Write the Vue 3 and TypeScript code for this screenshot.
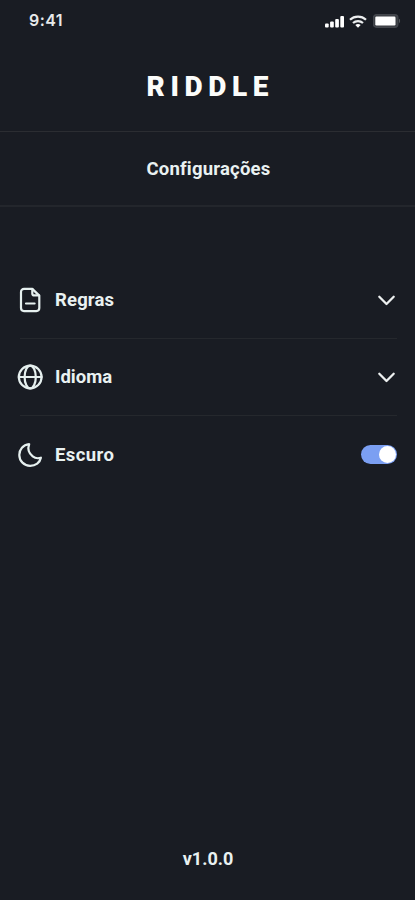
<script setup lang="ts">
import { ref } from 'vue'

type Row = { id: 'rules' | 'language' | 'dark'; label: string }

const rows: Row[] = [
  { id: 'rules', label: 'Regras' },
  { id: 'language', label: 'Idioma' },
  { id: 'dark', label: 'Escuro' },
]
const dark = ref(true)
</script>

<template>
  <div class="screen">
    <div class="status">
      <span class="time">9:41</span>
      <div class="indicators">
        <svg class="signal" width="20" height="13" viewBox="0 0 20 13" fill="#fff">
          <rect x="1" y="8.6" width="3.7" height="4" rx="1" />
          <rect x="6.1" y="6.6" width="3.7" height="6" rx="1" />
          <rect x="11.2" y="4" width="3.7" height="8.6" rx="1" />
          <rect x="16.3" y="1" width="3.7" height="11.6" rx="1" />
        </svg>
        <svg class="wifi" width="18" height="13" viewBox="0 0 18 13" fill="none" stroke="#eceeef" stroke-width="2.2">
          <path d="M1 4.7C5.5 0.5 12.5 0.5 17 4.7" />
          <path d="M4 8C6.8 5.4 11.2 5.4 14 8" />
          <path d="M6.3 10.1C7.9 8.7 10.1 8.7 11.7 10.1L9 12.8Z" fill="#fff" stroke="none" />
        </svg>
        <svg class="battery" width="28" height="14" viewBox="0 0 28 14">
          <rect x="0.4" y="0.8" width="24.4" height="12.4" rx="3" fill="#3a3d43" stroke="#43464c" stroke-width="1.4" />
          <rect x="2.3" y="2.6" width="20.2" height="8.8" rx="1.2" fill="#fff" />
          <path d="M26 4.8C27.5 5.4 27.5 8.6 26 9.2Z" fill="#55585d" />
        </svg>
      </div>
    </div>

    <header class="brand"><h1>RIDDLE</h1></header>
    <div class="heading"><h2>Configurações</h2></div>

    <main class="list">
      <div v-for="row in rows" :key="row.id" class="row">
        <svg v-if="row.id === 'rules'" class="icon" viewBox="0 0 28 28">
          <path d="M16.3 2.9H8a3 3 0 0 0-3 3v16.2a3 3 0 0 0 3 3h12.3a3 3 0 0 0 3-3V9.6Z" />
          <path d="M16.3 3v4.4a2 2 0 0 0 2 2h4.6M10 17.5h8.6" />
        </svg>
        <svg v-else-if="row.id === 'language'" class="icon" viewBox="0 0 28 28">
          <circle cx="14.2" cy="14" r="11.4" />
          <ellipse cx="14.2" cy="14" rx="5.6" ry="11.4" />
          <path d="M2.8 14h22.8" />
        </svg>
        <svg v-else class="icon" viewBox="0 0 28 28">
          <path d="M13.2 3.2C7 3.9 3.3 8.4 3.3 14c0 6 4.8 10.8 10.8 10.8 5.5 0 9.9-3.3 10.8-8.1-2.4.8-5.7.7-8.2-1.3-3.8-3-5.2-7.6-3.5-12.2Z" />
        </svg>
        <span class="label" :class="row.id">{{ row.label }}</span>
        <button
          v-if="row.id === 'dark'"
          class="toggle"
          :class="{ on: dark }"
          role="switch"
          :aria-checked="dark"
          @click="dark = !dark"
        ><span class="knob"></span></button>
        <svg v-else class="chevron" width="20" height="14" viewBox="0 0 20 14">
          <path d="M3.3 3.8 10.5 11 17.7 3.8" />
        </svg>
      </div>
    </main>

    <footer class="version">v1.0.0</footer>
  </div>
</template>

<style>
body {
  background: #191c23;
}
</style>

<style scoped>
.screen {
  width: 415px;
  height: 900px;
  box-sizing: border-box;
  display: flex;
  flex-direction: column;
  overflow: hidden;
  background: #191c23;
  color: #e9f1f1;
  font-family: Roboto, 'Liberation Sans', sans-serif;
  font-weight: 700;
}
.status {
  height: 42px;
  box-sizing: border-box;
  padding: 0 14px 0 29px;
  display: flex;
  align-items: center;
  justify-content: space-between;
}
.time {
  font-family: Inter, sans-serif;
  font-weight: 600;
  font-size: 16px;
  line-height: 20px;
  letter-spacing: 0.4px;
  padding-bottom: 2px;
  color: #e7e9ea;
}
.indicators {
  display: flex;
  align-items: center;
  gap: 5px;
}
.wifi {
  margin-right: 1px;
}
.signal,
.wifi,
.battery,
.icon,
.chevron {
  display: block;
  flex: none;
}
.brand {
  height: 90px;
  box-sizing: border-box;
  border-bottom: 1px solid #2b2d32;
  display: flex;
  justify-content: center;
  padding-top: 28px;
}
h1 {
  margin: 0 -5.6px 0 0;
  font-size: 28px;
  line-height: 33px;
  font-weight: 900;
  letter-spacing: 5.6px;
  color: #fbfcfa;
}
.heading {
  height: 75px;
  box-sizing: border-box;
  border-bottom: 2px solid #23262c;
  display: flex;
  align-items: center;
  justify-content: center;
}
h2 {
  margin: 0;
  font-size: 18.5px;
  line-height: 24px;
  font-weight: 700;
  letter-spacing: 0.2px;
  padding-left: 2px;
}
.list {
  padding: 54px 18px 0 20px;
}
.row {
  height: 77.5px;
  box-sizing: border-box;
  display: flex;
  align-items: center;
  border-bottom: 1px solid #25282d;
}
.row:first-child {
  padding-top: 1px;
}
.row:last-child {
  border-bottom: 0;
}
.icon {
  width: 28px;
  height: 28px;
  margin-left: -4px;
}
.icon path,
.icon circle,
.icon ellipse {
  fill: none;
  stroke: #e6f0ef;
  stroke-width: 2.2;
  stroke-linecap: round;
  stroke-linejoin: round;
}
.label {
  flex: 1;
  margin-left: 11px;
  font-size: 18.5px;
  line-height: 24px;
}
.label.rules {
  letter-spacing: 0.15px;
}
.label.dark {
  letter-spacing: 0.4px;
}
.chevron {
  margin-right: 1px;
}
.chevron path {
  fill: none;
  stroke: #edf0f0;
  stroke-width: 2.3;
  stroke-linecap: round;
  stroke-linejoin: round;
}
.toggle {
  width: 36px;
  height: 19px;
  padding: 1px;
  border: 0;
  border-radius: 10px;
  background: #50545d;
  display: flex;
  align-items: center;
}
.toggle.on {
  background: #7b9ff2;
  justify-content: flex-end;
}
.knob {
  width: 17px;
  height: 17px;
  border-radius: 50%;
  background: #fff;
}
.version {
  margin-top: auto;
  padding: 0 0 29px 1px;
  text-align: center;
  font-size: 18px;
  line-height: 24px;
}
</style>
